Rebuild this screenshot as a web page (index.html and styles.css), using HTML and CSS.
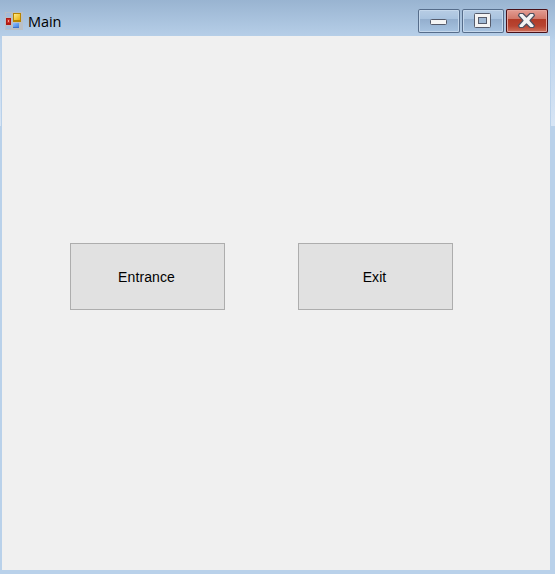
FILE: index.html
```
<!DOCTYPE html>
<html lang="en">
<head>
<meta charset="utf-8">
<title>Main</title>
<link rel="stylesheet" href="styles.css">
</head>
<body>
<div class="window">
  <header class="titlebar">
    <svg class="app-icon" width="18" height="18" viewBox="0 0 18 18" shape-rendering="crispEdges">
      <defs>
        <linearGradient id="gold" x2="1" y2="1"><stop stop-color="#ffec8a"/><stop offset="1" stop-color="#e8ae0c"/></linearGradient>
        <linearGradient id="blue" x2="1" y2="1"><stop stop-color="#8fc0ff"/><stop offset="1" stop-color="#3f7fe0"/></linearGradient>
      </defs>
      <path fill="#b9bfc6" d="M0 0h18v18H0z"/>
      <path fill="#a4bddb" d="M1 1h5v4H1zM1 14h5v3H1z"/>
      <path fill="#b01812" d="M1 6h5v7H1z"/><path fill="#cc3026" d="M2 7h3v4H2z"/><path fill="#f5a295" d="M3 8h1v2H3z"/>
      <path fill="#b78400" d="M8 1h8v9H8z"/><path fill="url(#gold)" d="M9 2h6v6H9z"/>
      <path fill="#3c72cb" d="M8 11h6v5H8z"/><path fill="url(#blue)" d="M8 11h6v4H8z"/>
    </svg>
    <h1 class="title">Main</h1>
    <div class="controls">
      <div class="control">
        <svg width="42" height="24" viewBox="0 0 42 24"><rect x="12.500" y="10.500" width="16" height="5" rx="1" fill="#f5f5f5" stroke="#555b6b"/></svg>
      </div>
      <div class="control">
        <svg width="42" height="24" viewBox="0 0 42 24"><rect x="12.500" y="4.500" width="16" height="14" rx="1" fill="#f3f3f3" stroke="#555b6b"/><rect x="16.500" y="8.500" width="8" height="6" fill="#9fb9d5" stroke="#555b6b"/></svg>
      </div>
      <div class="control close">
        <svg width="42" height="24" viewBox="0 0 42 24"><path d="M13.500 4.500H17L20.500 8L24 4.500H27.500L28.500 6.500L24 11.500L28.500 16.500L27.500 18.500H24L20.500 15L17 18.500H13.500L12.500 16.500L17 11.500L12.500 6.500Z" fill="#f3f3f3" stroke="#50505f" stroke-width="1.200" stroke-linejoin="round"/></svg>
      </div>
    </div>
  </header>
  <main class="client">
    <button class="button">Entrance</button>
    <button class="button">Exit</button>
  </main>
</div>
</body>
</html>
```
FILE: styles.css
```
* { box-sizing: border-box; }
body { margin: 0; }
.window {
  width: 555px;
  height: 574px;
  padding: 0 5px 4px 2px;
  display: flex;
  flex-direction: column;
  background:
    linear-gradient(#b9d1ea00 36px, #d7e5f5 126px) 0 0 / 1px 126px no-repeat,
    linear-gradient(#b9d1ea00 36px, #d7e5f5 126px) 551px 0 / 4px 126px no-repeat,
    linear-gradient(#99b4d1, #b9d1ea 40px);
}
.titlebar {
  height: 36px;
  flex: none;
  display: flex;
  align-items: flex-start;
}
.app-icon { margin: 12px 0 0 3px; }
.title {
  margin: 12px 0 0 5px;
  font: 400 14.5px/20px "Open Sans", sans-serif;
  letter-spacing: -0.1px;
  color: #000;
}
.controls {
  display: flex;
  gap: 2px;
  margin: 9px 2px 0 auto;
}
.control {
  width: 42px;
  height: 24px;
  border-radius: 2px;
  box-shadow: inset 0 0 0 1px #566d8b, inset 0 0 0 2px #c5d8ec;
  background: linear-gradient(#b9cee5, #a9c3df 10px, #93aecd 10px, #a9c5e2);
}
.control svg { display: block; }
.close {
  box-shadow: inset 0 0 0 1px #481018, inset 0 0 0 2px #e5a49b;
  background: linear-gradient(#e5a097, #d17768 10px, #b23a26 10px, #b84431 17px, #d47b64);
}
.client {
  flex: 1;
  display: flex;
  align-items: flex-start;
  gap: 73px;
  padding: 207px 0 0 68px;
  background: #f0f0f0;
}
.button {
  width: 155px;
  height: 67px;
  padding: 0 2px 0 0;
  border: 1px solid #adadad;
  background: #e1e1e1;
  color: #000;
  font: 14px "Liberation Sans", Arial, sans-serif;
  letter-spacing: 0.1px;
}
```
